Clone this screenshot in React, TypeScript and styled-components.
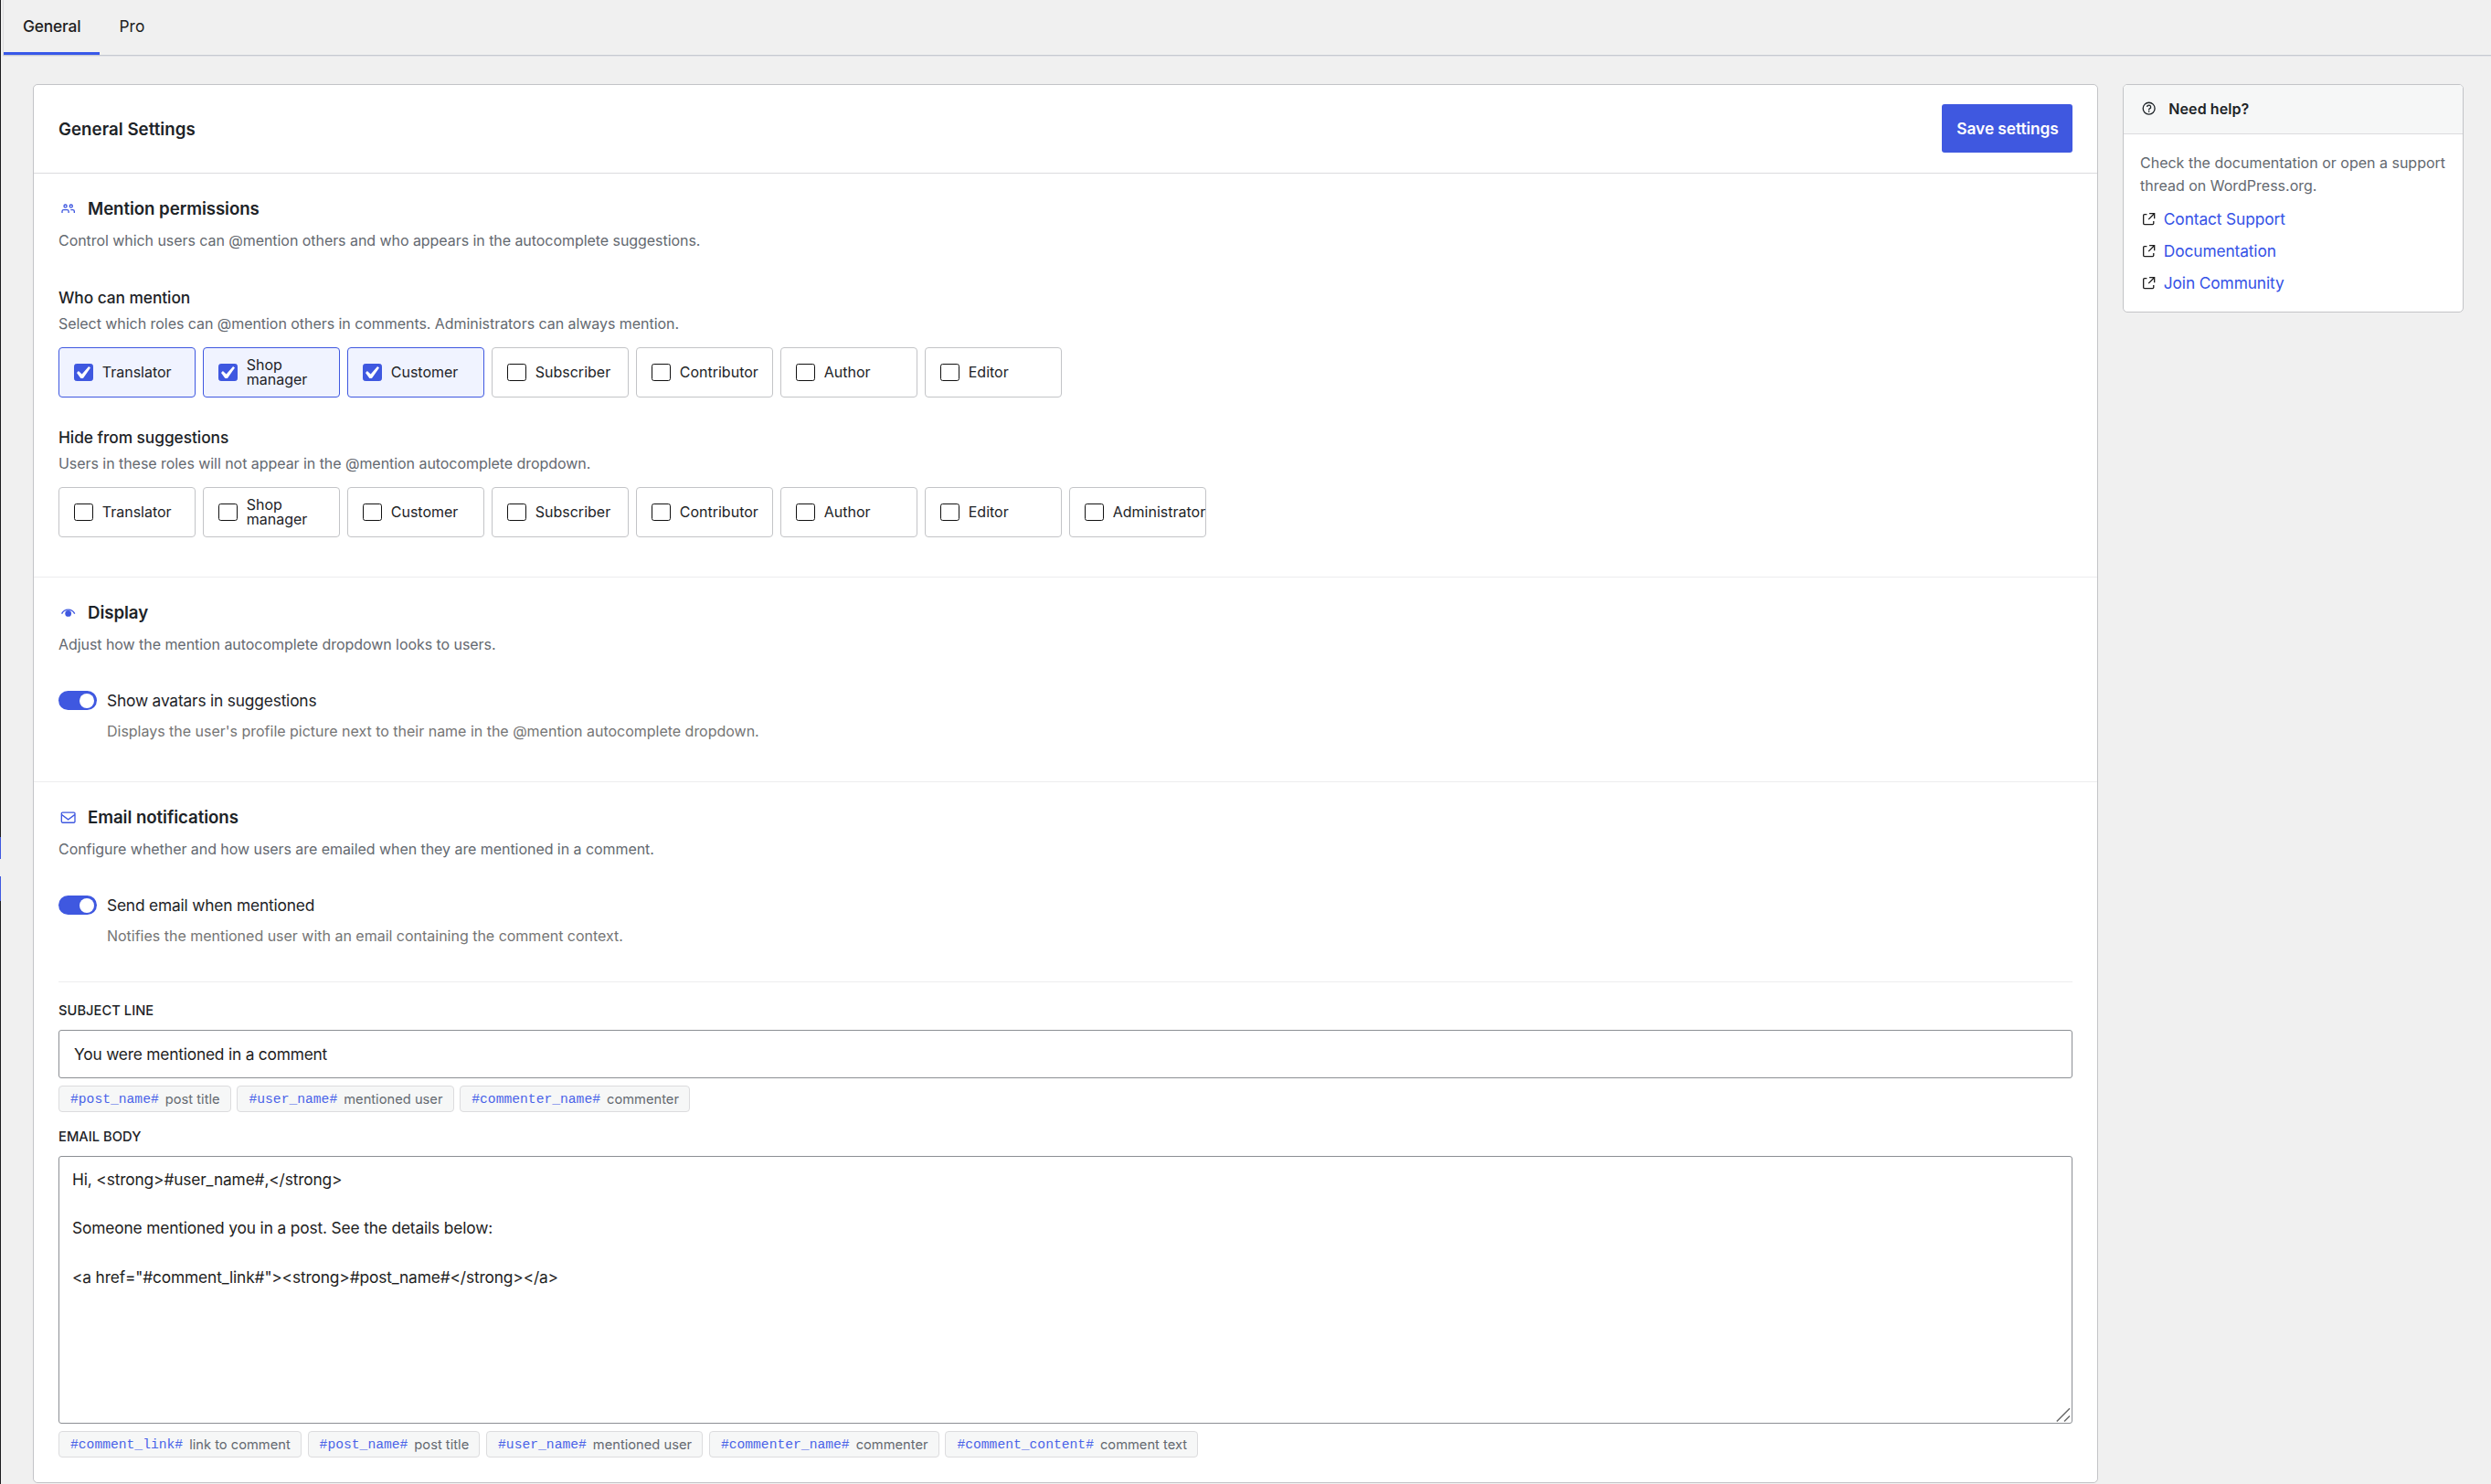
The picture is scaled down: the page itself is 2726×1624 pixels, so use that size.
import React, { useState } from "react";
import styled, { createGlobalStyle } from "styled-components";

const blue = "#3f58e0";
const ink = "#1d2327";

const GlobalStyle = createGlobalStyle`
  *, *::before, *::after { box-sizing: border-box; }
  body {
    margin: 0;
    background: #f0f0f0;
    color: ${ink};
    font: 400 16px/24px Inter, "Liberation Sans", sans-serif;
    overflow: hidden;
  }
  h1, h2, h3, p { margin: 0; }
`;

/* ---------- page frame ---------- */

const Page = styled.div`
  display: grid;
  grid-template-columns: 1px 1fr;
  height: 1624px;
`;

const MenuEdge = styled.div`
  display: flex;
  flex-direction: column;
`;

const EdgePart = styled.div<{ $tone: string; $h?: number }>`
  background: ${(p) => p.$tone};
  ${(p) => (p.$h ? `flex: none; height: ${p.$h}px;` : "flex: 1;")}
`;

const Main = styled.div`
  display: flex;
  flex-direction: column;
  padding-left: 2px;
`;

const TabBar = styled.nav`
  display: flex;
  height: 61px;
  border-left: 1px solid #dcdcde;
  border-bottom: 1px solid #c6c9d0;
  box-shadow: 0 1px 0 #e3e4e8;
`;

const Tab = styled.button<{ $active?: boolean }>`
  height: 60px;
  padding: 0 21px 1px;
  border: 0;
  border-bottom: 3px solid ${(p) => (p.$active ? "#3858e9" : "transparent")};
  background: none;
  color: #1e1e1e;
  font: 500 17.33px/21px Inter, "Liberation Sans", sans-serif;
  font-weight: ${(p) => (p.$active ? 500 : 400)};
  letter-spacing: ${(p) => (p.$active ? "-0.16px" : "0.1px")};
`;

const Columns = styled.div`
  display: grid;
  grid-template-columns: 2260px 373px;
  gap: 27px;
  align-items: start;
  padding: 31px 30px 0 33px;
`;

const Card = styled.section`
  background: #fff;
  border: 1px solid #c3c4c7;
  border-radius: 5px;
  overflow: hidden;
`;

/* ---------- main card ---------- */

const CardHeader = styled.header`
  display: flex;
  align-items: center;
  justify-content: space-between;
  height: 97px;
  padding: 0 27px;
  border-bottom: 1px solid #dcdcde;
`;

const CardTitle = styled.h1`
  font-size: 18.67px;
  font-weight: 600;
  line-height: 25px;
  letter-spacing: 0.05px;
`;

const SaveButton = styled.button`
  width: 143px;
  height: 53px;
  margin-bottom: 1px;
  padding: 1px 0 0 1px;
  border: 0;
  border-radius: 3px;
  background: ${blue};
  color: #fff;
  font: 600 17.33px/20px Inter, "Liberation Sans", sans-serif;
  letter-spacing: -0.08px;
`;

const Section = styled.section<{ $last?: boolean }>`
  padding: 26px 27px ${(p) => (p.$last ? 26.67 : 43)}px;
  border-bottom: ${(p) => (p.$last ? "0" : "1px solid #ededee")};
`;

const SectionHeading = styled.div`
  display: flex;
  align-items: center;
  gap: 10.67px;
  height: 25px;
  color: ${blue};
`;

const SectionTitle = styled.h2`
  color: ${ink};
  font-size: 18.67px;
  font-weight: 600;
  line-height: 25px;
  letter-spacing: -0.06px;
`;

const SectionText = styled.p`
  margin-top: 10px;
  color: #646970;
  line-height: 24px;
  letter-spacing: -0.055px;
`;

const Field = styled.div<{ $gap: number }>`
  margin-top: ${(p) => p.$gap}px;
`;

const FieldTitle = styled.h3`
  font-size: 17.33px;
  font-weight: 500;
  line-height: 24px;
  letter-spacing: -0.06px;
`;

const FieldText = styled.p`
  margin-top: 6px;
  color: #646970;
  line-height: 21px;
  letter-spacing: -0.05px;
`;

const RoleList = styled.div`
  display: flex;
  gap: 8px;
  margin-top: 15px;
`;

const RoleBox = styled.label<{ $on: boolean }>`
  display: flex;
  align-items: center;
  gap: 9.75px;
  width: 150px;
  height: 55px;
  padding-left: 16px;
  border: 1px solid ${(p) => (p.$on ? "#3f58e0" : "#c3c4c7")};
  border-radius: 4px;
  background: ${(p) => (p.$on ? "#f0f3ff" : "#fff")};
  line-height: 16px;
`;

const RoleName = styled.span`
  margin-bottom: 2px;
`;

const Check = styled.span<{ $on: boolean }>`
  display: flex;
  align-items: center;
  justify-content: center;
  flex: none;
  width: 21px;
  height: 19px;
  border: 1px solid ${(p) => (p.$on ? blue : "#111")};
  border-radius: 2.67px;
  background: ${(p) => (p.$on ? blue : "#fff")};
`;

const ToggleRow = styled.label`
  display: flex;
  align-items: center;
  gap: 11px;
  height: 21px;
  margin-top: 39px;
  font-size: 17.33px;
  letter-spacing: -0.18px;
`;

const Track = styled.span`
  display: flex;
  align-items: center;
  justify-content: flex-end;
  flex: none;
  width: 42px;
  height: 21px;
  padding-right: 2.67px;
  border-radius: 11px;
  background: ${blue};
`;

const Knob = styled.span`
  width: 16px;
  height: 16px;
  border-radius: 50%;
  background: #fff;
`;

const ToggleHelp = styled.p`
  margin: 12px 0 1px 53px;
  color: #757575;
  line-height: 22px;
  letter-spacing: -0.012px;
`;

const Rule = styled.hr`
  margin: 39px 0 21px;
  border: 0;
  border-top: 1px solid #ededee;
`;

const InputLabel = styled.label`
  display: block;
  margin-bottom: 11px;
  font-size: 14.67px;
  font-weight: 500;
  line-height: 20px;
  letter-spacing: 0.05px;
  text-transform: uppercase;
`;

const SubjectInput = styled.input`
  display: block;
  width: 100%;
  height: 53px;
  padding: 0 16px;
  border: 1px solid #8c8f94;
  border-radius: 3px;
  background: #fff;
  color: #1e1e1e;
  font: 400 17.33px/24px Inter, "Liberation Sans", sans-serif;
  letter-spacing: -0.2px;
  outline: none;
`;

const BodyWrap = styled.div`
  position: relative;
  height: 293px;
`;

const BodyInput = styled.textarea`
  display: block;
  width: 100%;
  height: 100%;
  padding: 12px 14px;
  border: 1px solid #8c8f94;
  border-radius: 3px;
  background: #fff;
  color: #1e1e1e;
  font: 400 17.33px/26.67px Inter, "Liberation Sans", sans-serif;
  letter-spacing: -0.15px;
  resize: none;
  outline: none;
`;

const Grip = styled.svg`
  position: absolute;
  right: 2px;
  bottom: 2px;
`;

const TagList = styled.div<{ $after?: number }>`
  display: flex;
  gap: 6.67px;
  margin: 8px 0 ${(p) => p.$after ?? 0}px;
`;

const TagChip = styled.span`
  display: flex;
  align-items: center;
  gap: 7px;
  height: 29.33px;
  padding: 0 11.2px 0 12px;
  border: 1px solid #dcdcde;
  border-radius: 4px;
  background: #f6f7f7;
  color: #646970;
  font-size: 14.67px;
  letter-spacing: 0.02px;
  white-space: nowrap;
`;

const TagCode = styled.code`
  color: #4a63e8;
  font: 400 14.67px/20px "Courier New", "Liberation Mono", monospace;
  letter-spacing: 0;
`;

/* ---------- side card ---------- */

const HelpHeader = styled.header`
  display: flex;
  align-items: center;
  gap: 11px;
  height: 54px;
  padding: 0 0 1px 17px;
  border-bottom: 1px solid #dcdcde;
  background: #f6f7f7;
`;

const HelpTitle = styled.h2`
  font-size: 16px;
  font-weight: 600;
  letter-spacing: 0.08px;
`;

const HelpBody = styled.div`
  padding: 19px 17px 14px;
`;

const HelpText = styled.p`
  margin: 0 0 6px 1px;
  color: #646970;
  line-height: 25px;
`;

const HelpLink = styled.a`
  display: flex;
  align-items: center;
  gap: 5.5px;
  height: 35px;
  color: #1e1e1e;
`;

const LinkText = styled.span`
  color: #3552e6;
  font-size: 17.33px;
  letter-spacing: -0.12px;
`;

/* ---------- icons ---------- */

const Glyph = styled.svg.attrs({ viewBox: "0 0 24 24", width: 21.33, height: 21.33 })`
  display: block;
  flex: none;
  fill: currentColor;
`;

const PeopleIcon = () => (
  <Glyph>
    <path
      fillRule="evenodd"
      d="M15.5 9.5a1 1 0 100-2 1 1 0 000 2zm0 1.5a2.5 2.5 0 100-5 2.5 2.5 0 000 5zm-2.25 6v-2a2.75 2.75 0 00-2.75-2.75h-4A2.75 2.75 0 003.75 15v2h1.5v-2c0-.69.56-1.25 1.25-1.25h4c.69 0 1.25.56 1.25 1.25v2h1.5zm7-2v2h-1.5v-2c0-.69-.56-1.25-1.25-1.25H15v-1.5h2.5A2.75 2.75 0 0120.25 15zM9.5 8.5a1 1 0 11-2 0 1 1 0 012 0zm1.5 0a2.5 2.5 0 11-5 0 2.5 2.5 0 015 0z"
    />
  </Glyph>
);

const EyeIcon = () => (
  <Glyph>
    <path
      d="M4 13.1C4.9 11.400 7.400 8 12 8s7.100 3.400 8 5.100"
      fill="none"
      stroke="currentColor"
      strokeWidth="1.6"
    />
    <circle cx="12" cy="12.800" r="3.800" />
  </Glyph>
);

const MailIcon = () => (
  <Glyph>
    <path
      fillRule="evenodd"
      d="M3 7c0-1.1.9-2 2-2h14a2 2 0 0 1 2 2v10c0 1.1-.9 2-2 2H5a2 2 0 0 1-2-2V7Zm2-.5h14c.3 0 .5.2.5.5v1L12 13.5 4.5 7.9V7c0-.3.2-.5.5-.5Zm-.5 3.3V17c0 .3.2.5.5.5h14c.3 0 .5-.2.5-.5V9.8L12 15.4 4.5 9.8Z"
    />
  </Glyph>
);

const HelpIcon = () => (
  <Glyph>
    <circle cx="12" cy="12" r="7.25" fill="none" stroke="currentColor" strokeWidth="1.5" />
    <path
      d="M9.75 10.200a2.250 2.250 0 1 1 3.100 2.080c-.55.22-.85.620-.85 1.170V14"
      fill="none"
      stroke="currentColor"
      strokeWidth="1.5"
    />
    <path d="M11.250 15h1.5v1.5h-1.5z" />
  </Glyph>
);

const ExternalIcon = () => (
  <Glyph>
    <path d="M19.5 4.5h-7V6h4.44l-5.97 5.97 1.06 1.06L18 7.06v4.44h1.5v-7Zm-13 1a2 2 0 0 0-2 2v10a2 2 0 0 0 2 2h10a2 2 0 0 0 2-2v-3H17v3a.5.5 0 0 1-.5.5h-10a.5.5 0 0 1-.5-.5v-10a.5.5 0 0 1 .5-.5h3V5.5h-3Z" />
  </Glyph>
);

const CheckMark = () => (
  <svg viewBox="5.78 4.89 10.39 9.32" width="15" height="13.5" fill="#fff">
    <path d="M14.83 4.89l1.34.94-5.81 8.38H9.02L5.78 9.67l1.34-1.25 2.57 2.4z" />
  </svg>
);

/* ---------- parts ---------- */

const roles = ["Translator", "Shop manager", "Customer", "Subscriber", "Contributor", "Author", "Editor"];

function RolePicker({ names, initial }: { names: string[]; initial: string[] }) {
  const [chosen, setChosen] = useState(initial);
  const flip = (name: string) =>
    setChosen((now) => (now.includes(name) ? now.filter((n) => n !== name) : [...now, name]));
  return (
    <RoleList>
      {names.map((name) => {
        const on = chosen.includes(name);
        return (
          <RoleBox key={name} $on={on} onClick={() => flip(name)}>
            <Check $on={on}>{on && <CheckMark />}</Check>
            <RoleName>{name}</RoleName>
          </RoleBox>
        );
      })}
    </RoleList>
  );
}

function Toggle({ label, help }: { label: string; help: string }) {
  return (
    <>
      <ToggleRow>
        <Track>
          <Knob />
        </Track>
        {label}
      </ToggleRow>
      <ToggleHelp>{help}</ToggleHelp>
    </>
  );
}

function Tags({ items, after }: { items: [string, string][]; after?: number }) {
  return (
    <TagList $after={after}>
      {items.map(([code, text]) => (
        <TagChip key={code}>
          <TagCode>{code}</TagCode>
          <span>{text}</span>
        </TagChip>
      ))}
    </TagList>
  );
}

const emailBody = `Hi, <strong>#user_name#,</strong>

Someone mentioned you in a post. See the details below:

<a href="#comment_link#"><strong>#post_name#</strong></a>`;

export default function App() {
  return (
    <Page>
      <GlobalStyle />
      <MenuEdge>
        <EdgePart $tone="#1d1d1f" $h={916} />
        <EdgePart $tone={blue} $h={24} />
        <EdgePart $tone="#f0f0f0" $h={19} />
        <EdgePart $tone={blue} $h={27} />
        <EdgePart $tone="#1d1d1f" />
      </MenuEdge>
      <Main>
        <TabBar>
          <Tab $active>General</Tab>
          <Tab>Pro</Tab>
        </TabBar>
        <Columns>
          <Card>
            <CardHeader>
              <CardTitle>General Settings</CardTitle>
              <SaveButton>Save settings</SaveButton>
            </CardHeader>

            <Section>
              <SectionHeading>
                <PeopleIcon />
                <SectionTitle>Mention permissions</SectionTitle>
              </SectionHeading>
              <SectionText>
                Control which users can @mention others and who appears in the autocomplete suggestions.
              </SectionText>
              <Field $gap={39}>
                <FieldTitle>Who can mention</FieldTitle>
                <FieldText>
                  Select which roles can @mention others in comments. Administrators can always mention.
                </FieldText>
                <RolePicker names={roles} initial={["Translator", "Shop manager", "Customer"]} />
              </Field>
              <Field $gap={32}>
                <FieldTitle>Hide from suggestions</FieldTitle>
                <FieldText>Users in these roles will not appear in the @mention autocomplete dropdown.</FieldText>
                <RolePicker names={[...roles, "Administrator"]} initial={[]} />
              </Field>
            </Section>

            <Section>
              <SectionHeading>
                <EyeIcon />
                <SectionTitle>Display</SectionTitle>
              </SectionHeading>
              <SectionText>Adjust how the mention autocomplete dropdown looks to users.</SectionText>
              <Toggle
                label="Show avatars in suggestions"
                help="Displays the user's profile picture next to their name in the @mention autocomplete dropdown."
              />
            </Section>

            <Section $last>
              <SectionHeading>
                <MailIcon />
                <SectionTitle>Email notifications</SectionTitle>
              </SectionHeading>
              <SectionText>
                Configure whether and how users are emailed when they are mentioned in a comment.
              </SectionText>
              <Toggle
                label="Send email when mentioned"
                help="Notifies the mentioned user with an email containing the comment context."
              />
              <Rule />
              <InputLabel htmlFor="subject">Subject line</InputLabel>
              <SubjectInput id="subject" defaultValue="You were mentioned in a comment" />
              <Tags
                after={16.67}
                items={[
                  ["#post_name#", "post title"],
                  ["#user_name#", "mentioned user"],
                  ["#commenter_name#", "commenter"],
                ]}
              />
              <InputLabel htmlFor="body">Email body</InputLabel>
              <BodyWrap>
                <BodyInput id="body" spellCheck={false} defaultValue={emailBody} />
                <Grip width="16" height="16" viewBox="0 0 16 16" stroke="#6b6b6b" strokeWidth="1.5">
                  <path d="M.8 15.500 15 1.200M9 15.500 15 9.500" />
                </Grip>
              </BodyWrap>
              <Tags
                items={[
                  ["#comment_link#", "link to comment"],
                  ["#post_name#", "post title"],
                  ["#user_name#", "mentioned user"],
                  ["#commenter_name#", "commenter"],
                  ["#comment_content#", "comment text"],
                ]}
              />
            </Section>
          </Card>

          <Card>
            <HelpHeader>
              <HelpIcon />
              <HelpTitle>Need help?</HelpTitle>
            </HelpHeader>
            <HelpBody>
              <HelpText>Check the documentation or open a support thread on WordPress.org.</HelpText>
              {["Contact Support", "Documentation", "Join Community"].map((text) => (
                <HelpLink key={text}>
                  <ExternalIcon />
                  <LinkText>{text}</LinkText>
                </HelpLink>
              ))}
            </HelpBody>
          </Card>
        </Columns>
      </Main>
    </Page>
  );
}
